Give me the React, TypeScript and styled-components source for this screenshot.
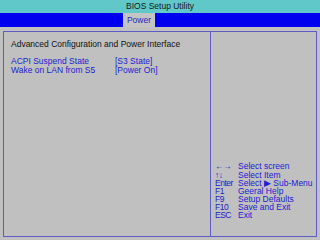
import styled, { createGlobalStyle } from 'styled-components';

const GlobalStyle = createGlobalStyle`
  html, body {
    margin: 0;
    padding: 0;
    background: #c0c0c0;
  }
  body {
    font-family: 'Liberation Sans', Arial, sans-serif;
  }
`;

const helpRows = [
  { key: '\u2190\u2192', text: 'Select screen' },
  { key: '\u2191\u2193', text: 'Select Item' },
  { key: 'Enter', text: 'Select \u25B6 Sub-Menu' },
  { key: 'F1', text: 'Geeral Help' },
  { key: 'F9', text: 'Setup Defaults' },
  { key: 'F10', text: 'Save and Exit' },
  { key: 'ESC', text: 'Exit' },
];

const App = () => {
  return (
    <Screen>
      <GlobalStyle />
      <TitleBar>BIOS Setup Utility</TitleBar>
      <MenuBar>
        <Tab>Power</Tab>
      </MenuBar>
      <Body>
        <Frame>
          <Main>
            <Heading>Advanced Configuration and Power Interface</Heading>
            <Options>
              <OptionName>ACPI Suspend State</OptionName>
              <OptionValue>[S3 State]</OptionValue>
              <OptionName>Wake on LAN from S5</OptionName>
              <OptionValue>[Power On]</OptionValue>
            </Options>
          </Main>
          <Side>
            <Help>
              {helpRows.map((r, i) => (
                <HelpRow key={r.key} $first={i === 0}>
                  <HelpKey>{r.key}</HelpKey>
                  <span>{r.text}</span>
                </HelpRow>
              ))}
            </Help>
          </Side>
        </Frame>
      </Body>
    </Screen>
  );
};

const Screen = styled.div`
  width: 320px;
  height: 240px;
  display: flex;
  flex-direction: column;
  background: #c0c0c0;
  overflow: hidden;
`;

const TitleBar = styled.div`
  height: 13px;
  background: #60c8c8;
  color: #181818;
  font-size: 8.5px;
  line-height: 13px;
  text-align: center;
`;

const MenuBar = styled.div`
  height: 14px;
  background: #0000ee;
  display: flex;
  padding-left: 123px;
`;

const Tab = styled.div`
  width: 32px;
  background: #c4c4c4;
  color: #2828b8;
  font-size: 8.5px;
  line-height: 14px;
  text-align: center;
`;

const Body = styled.div`
  flex: 1;
  padding: 4px 3px 3px 3px;
  display: flex;
`;

const Frame = styled.div`
  flex: 1;
  border: 1px solid #5c5cc4;
  display: grid;
  grid-template-columns: 207px 1fr;
`;

const Main = styled.div`
  border-right: 1px solid #5c5cc4;
  padding: 8px 0 0 7px;
  font-size: 8.5px;
`;

const Heading = styled.div`
  color: #101010;
  line-height: 9px;
  margin-bottom: 8px;
`;

const Options = styled.div`
  display: grid;
  grid-template-columns: 104px 1fr;
  line-height: 9px;
  color: #2020d0;
`;

const OptionName = styled.span``;
const OptionValue = styled.span``;

const Side = styled.div`
  display: flex;
  flex-direction: column;
  justify-content: flex-end;
  padding: 0 0 17px 4px;
`;

const Help = styled.div`
  color: #2020d0;
  font-size: 8.5px;
  line-height: 8px;
`;

const HelpRow = styled.div<{ $first?: boolean }>`
  display: grid;
  grid-template-columns: 23px 1fr;
  white-space: nowrap;
  margin-bottom: ${(p) => (p.$first ? '1px' : '0')};
`;

const HelpKey = styled.span`
  letter-spacing: -0.5px;
`;

export default App;
